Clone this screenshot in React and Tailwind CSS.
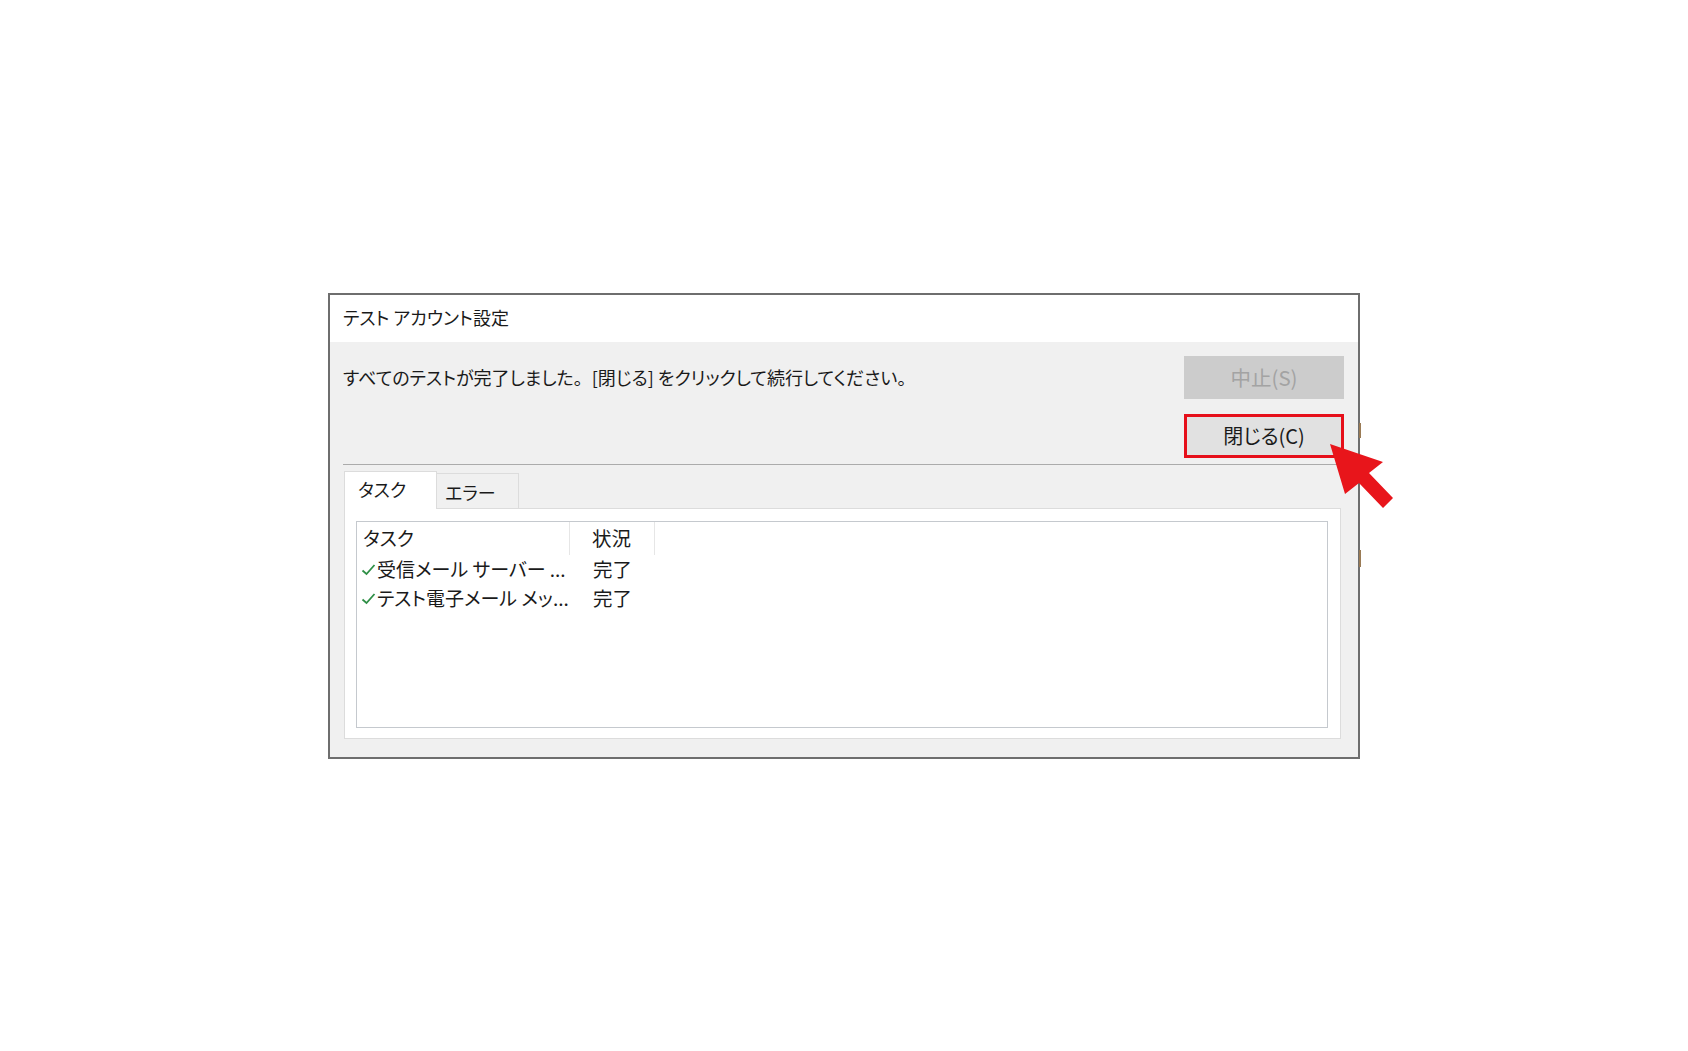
import React from "react";

const rows = [
  { task: "受信メール サーバー ...", status: "完了" },
  { task: "テスト電子メール メッ...", status: "完了" },
];

const Check = () => (
  <svg width="15" height="15" viewBox="0 0 15 15" className="shrink-0">
    <path d="M1.5 8.5 L5.5 12 L13.5 3" fill="none" stroke="#2f8f46" strokeWidth="1.8" />
  </svg>
);

const App = () => {
  return (
    <div className="w-screen h-screen bg-white flex items-center justify-center font-['Noto_Sans_CJK_JP',sans-serif] text-[#1a1a1a] [font-feature-settings:'palt']">
      <div className="relative w-[1032px] h-[466px] border-2 border-[#6e6e6e] bg-[#f0f0f0] flex flex-col">
        {/* title bar */}
        <div className="h-[47px] bg-white flex items-center pl-[13px] text-[18px] pb-[2px]">
          テスト アカウント設定
        </div>

        {/* message + buttons */}
        <div className="flex pt-[14px] pl-[13px] pr-[14px]">
          <div className="flex-1 h-[43px] flex items-center text-[18px] whitespace-pre">
            <span>
              すべてのテストが完了しました<span className="[font-feature-settings:normal]">。</span>[閉じる] をクリックして続行してください。
            </span>
          </div>
          <div className="w-[160px] flex flex-col gap-[15px]">
            <div className="h-[43px] bg-[#cccccc] flex items-center justify-center text-[20.5px] text-[#a3a3a3]">
              中止(S)
            </div>
            <div className="h-[44px] bg-[#e1e1e1] border-[3px] border-[#e60f1a] flex items-center justify-center text-[20px] text-[#1a1a1a]">
              閉じる(C)
            </div>
          </div>
        </div>

        <div className="ml-[13px] mt-[6px] h-px bg-[#ababab]" />

        {/* tabs */}
        <div className="ml-[14px] mt-[6px] flex items-end text-[18px]">
          <div className="w-[93px] h-[38px] bg-white border border-b-0 border-[#dcdcdc] -mb-px relative z-10 flex items-center pl-[13px] pb-[2px]">
            タスク
          </div>
          <div className="w-[82px] h-[35px] bg-[#f0f0f0] border border-l-0 border-b-0 border-[#dcdcdc] flex items-center pl-[8px] pt-[4px]">
            エラー
          </div>
        </div>

        {/* tab panel */}
        <div className="ml-[14px] mr-[17px] h-[231px] bg-white border border-[#dcdcdc] pt-[12px] pl-[11px] pr-[12px]">
          <div className="h-[207px] border border-[#c5c9ce] text-[19px]">
            <div className="flex h-[33px]">
              <div className="w-[213px] flex items-center pl-[6px] border-r border-[#e6e6e6]">タスク</div>
              <div className="w-[85px] flex items-center pl-[22px] border-r border-[#e6e6e6] text-[19.5px]">状況</div>
            </div>
            {rows.map((r) => (
              <div key={r.task} className="flex h-[29px]">
                <div className="w-[214px] flex items-center pl-[4px] gap-[1px] whitespace-nowrap">
                  <Check />
                  <span>{r.task}</span>
                </div>
                <div className="flex items-center pl-[22px] text-[19.5px]">{r.status}</div>
              </div>
            ))}
          </div>
        </div>

        {/* bits of the window behind */}
        <span className="absolute -right-[3px] top-[128px] w-[2px] h-[15px] bg-[#9a7b55]" />
        <span className="absolute -right-[3px] top-[255px] w-[2px] h-[17px] bg-[#9a7b55]" />

        {/* red pointer arrow */}
        <svg
          className="absolute left-[993px] top-[143px] pointer-events-none"
          width="75"
          height="75"
          viewBox="0 0 75 75"
        >
          <polygon
            points="7,6 60,24 46,35 70,60 60,70 36,45 22,56"
            fill="#e8151b"
          />
        </svg>
      </div>
    </div>
  );
};

export default App;
